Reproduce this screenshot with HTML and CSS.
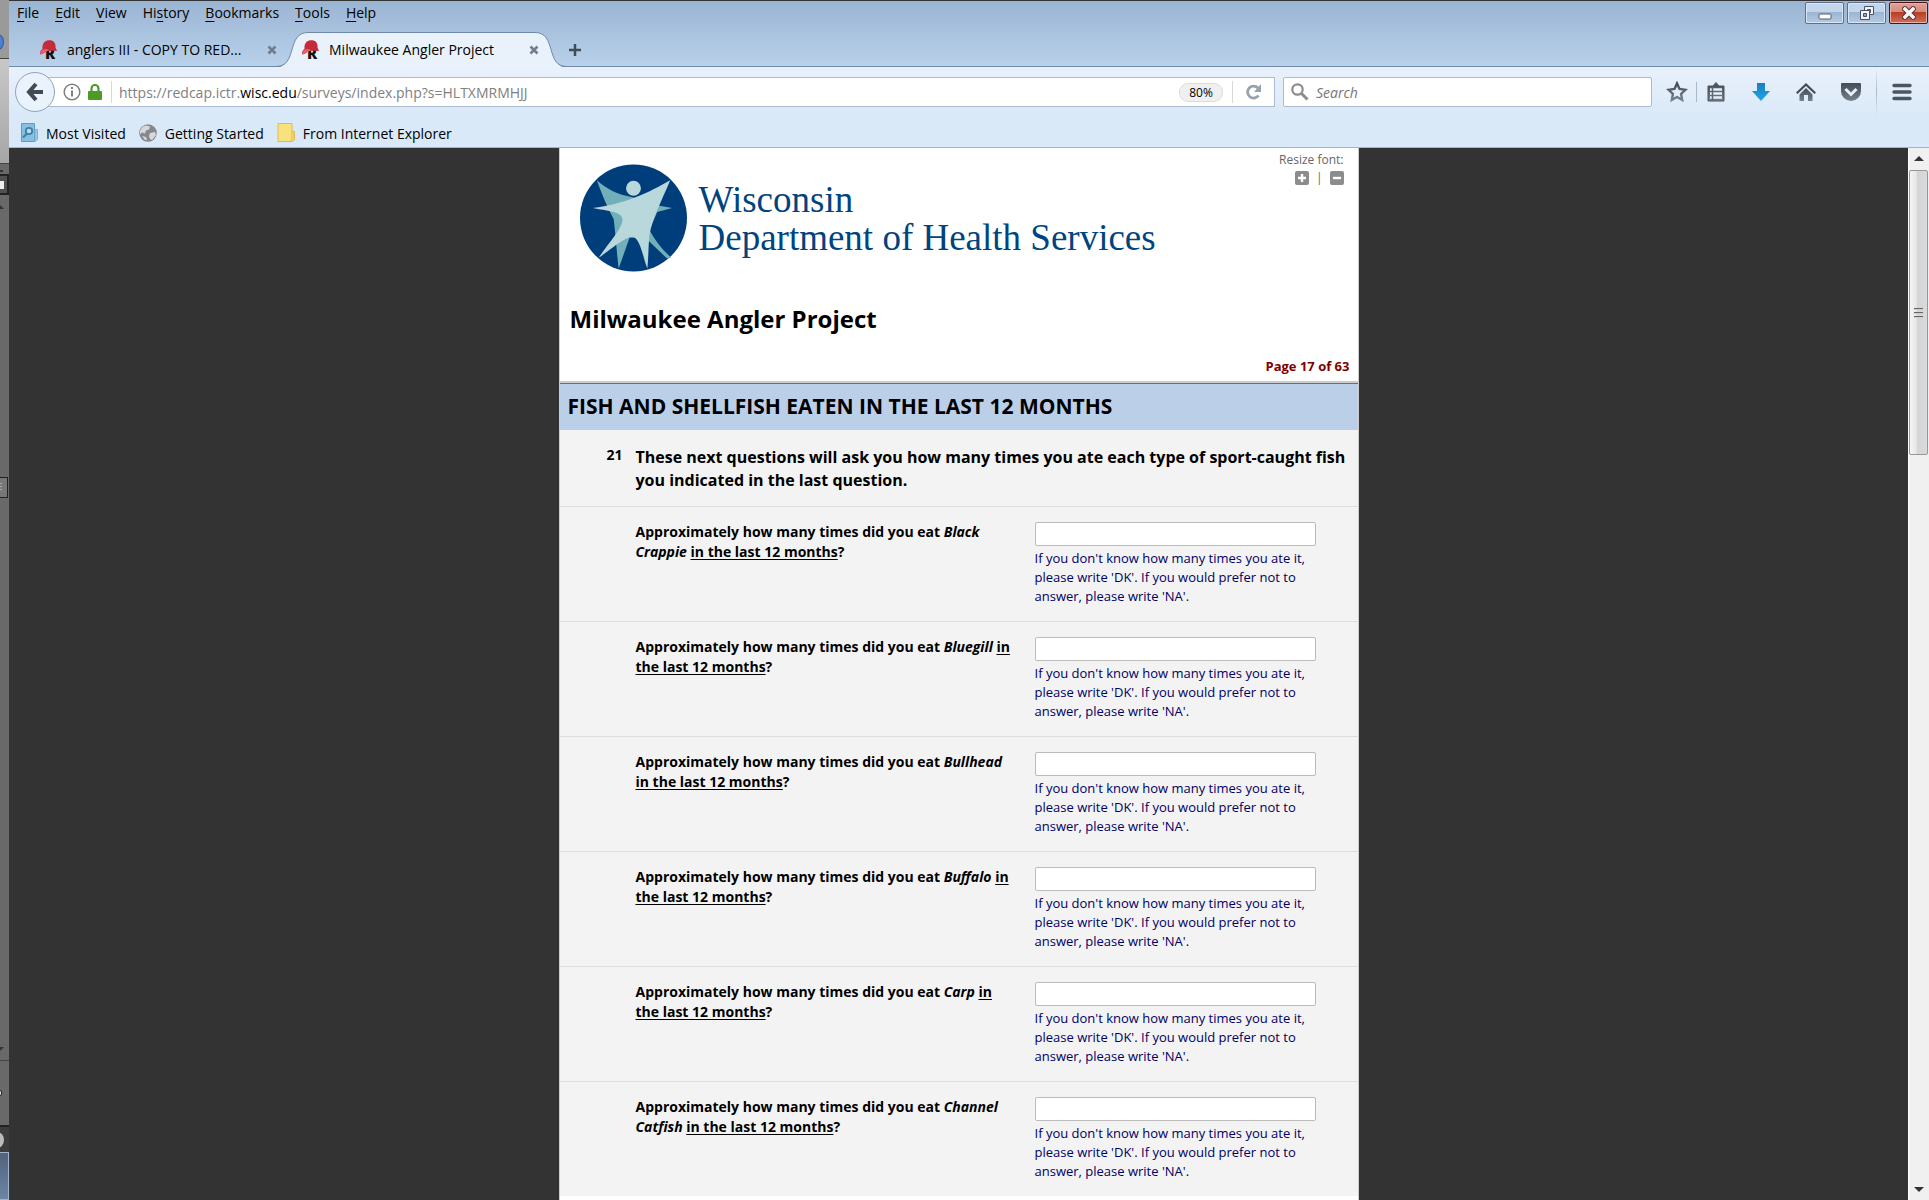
FILE: index.html
```html
<!DOCTYPE html>
<html lang="en">
<head>
<meta charset="utf-8">
<title>Milwaukee Angler Project</title>
<link rel="stylesheet" href="styles.css">
</head>
<body>
<svg class="defs" aria-hidden="true">
  <defs>
    <linearGradient id="steel" x1="0" y1="0" x2="0" y2="1"><stop offset="0" stop-color="#434c55"/><stop offset="1" stop-color="#76818c"/></linearGradient>
    <linearGradient id="sky" x1="0" y1="0" x2="0" y2="1"><stop offset="0" stop-color="#1a7fc0"/><stop offset="1" stop-color="#20a4ea"/></linearGradient>
    <symbol id="redcap" viewBox="0 0 18 20">
      <text x="5" y="19" font-family="Open Sans, sans-serif" font-size="15" font-weight="800" fill="#111">R</text>
      <path d="M2.500 9C2 3 5 .2 9.500 .2 14 .2 16 3.500 15.500 7.500L17 11 9 10.500C6 11 3.500 14 .5 14.500 -.5 12 .5 10.500 2.500 9Z" fill="#c62b3a"/>
      <path d="M.5 14.500C0 12 1 10.500 3 9.500 5 8.500 8 9 9 10.500 6 11 3.500 14 .5 14.500Z" fill="#e4606c"/>
    </symbol>
    <symbol id="x" viewBox="0 0 10 10"><path d="M1.500 1.500l7 7M8.500 1.500l-7 7" stroke="#6f7d8d" stroke-width="2.600"/></symbol>
  </defs>
</svg>

<aside class="behind" aria-hidden="true">
  <div class="behind-top"><span class="orb"></span></div>
  <div class="behind-bar"></div>
  <div class="behind-rule"></div>
  <div class="behind-tool"><span></span></div>
  <div class="behind-track">
    <i class="tri up"></i>
    <div class="behind-grip"><span></span></div>
    <i class="tri down"></i>
  </div>
  <div class="behind-foot"><span></span></div>
  <div class="behind-task"><span></span></div>
  <div class="behind-start"></div>
</aside>

<div class="window">
  <header class="titlebar">
    <div class="menurow">
      <nav class="menu">
        <button><u>F</u>ile</button><button><u>E</u>dit</button><button><u>V</u>iew</button><button>Hi<u>s</u>tory</button><button><u>B</u>ookmarks</button><button><u>T</u>ools</button><button><u>H</u>elp</button>
      </nav>
      <div class="controls">
        <button aria-label="Minimize"><svg width="14" height="16"><rect x="1" y="9" width="12" height="5" rx="1" fill="#fff" stroke="#555d70"/></svg></button>
        <button aria-label="Restore"><svg width="16" height="16"><g stroke="#4a5062" fill="#f4f4f6"><path d="M5.500 1.500h9v8h-9z"/><path d="M8.500 4.500h3v3h-3z" fill="#8ea8c8"/><path d="M1.500 5.500h9v9h-9z"/><path d="M4.500 8.500h3v3h-3z" fill="#8ea8c8"/></g></svg></button>
        <button class="close" aria-label="Close"><svg width="14" height="14"><path d="M3 3l8 8M11 3l-8 8" stroke="#5a3038" stroke-width="5.500" stroke-linecap="square"/><path d="M3 3l8 8M11 3l-8 8" stroke="#f6f6f6" stroke-width="3.500" stroke-linecap="square"/></svg></button>
      </div>
    </div>
    <div class="tabs">
      <div class="tab">
        <svg width="18" height="20"><use href="#redcap"/></svg>
        <span>anglers III - COPY TO RED...</span>
        <button aria-label="Close tab"><svg width="10" height="10"><use href="#x"/></svg></button>
      </div>
      <div class="tab active">
        <svg class="tabshape" width="291" height="36" aria-hidden="true"><path d="M0 35.500C22 35.500 10 .5 32 .5H259C281 .5 269 35.500 291 35.500V36H0Z" fill="#e9f1fb"/><path d="M0 34.500C22 34.500 10 .5 32 .5H259C281 .5 269 34.500 291 34.500" fill="none" stroke="#6f8aa9"/></svg>
        <svg width="18" height="20"><use href="#redcap"/></svg>
        <span>Milwaukee Angler Project</span>
        <button aria-label="Close tab"><svg width="10" height="10"><use href="#x"/></svg></button>
      </div>
      <button class="newtab" aria-label="New tab"><svg width="14" height="14"><path d="M7 1v12M1 7h12" stroke="#414c59" stroke-width="2.500"/></svg></button>
    </div>
  </header>

  <div class="toolbar">
    <div class="navrow">
      <button class="back" aria-label="Back"><svg width="20" height="20"><path d="M18 10H5M11 2l-7 8 7 8" fill="none" stroke="#414a54" stroke-width="4"/></svg></button>
      <div class="urlbar">
        <svg width="18" height="18"><circle cx="9" cy="9" r="7.800" fill="none" stroke="#808080" stroke-width="1.500"/><path d="M9 7.500v6M9 4v2" stroke="#808080" stroke-width="2"/></svg>
        <svg width="14" height="16"><path d="M3.500 8V4.500a3.500 3.500 0 017 0V8" fill="none" stroke="#4f9a26" stroke-width="2.200"/><rect x="0" y="7" width="14" height="9" rx="1" fill="#4f9a26"/></svg>
        <span class="sep"></span>
        <span class="url">https://redcap.ictr.<b>wisc.edu</b>/surveys/index.php?s=HLTXMRMHJJ</span>
        <button class="zoom">80%</button>
        <span class="sep"></span>
        <button aria-label="Reload"><svg width="16" height="16"><path d="M12.500 11.500A6 6 0 1112 4" fill="none" stroke="#95a2b0" stroke-width="2.800"/><path d="M15 0v8H8Z" fill="#95a2b0"/></svg></button>
      </div>
      <label class="search">
        <svg width="18" height="18"><circle cx="6.500" cy="6.500" r="5.200" fill="none" stroke="#8c8c8c" stroke-width="2.200"/><path d="M10.500 10.500l6 6" stroke="#8c8c8c" stroke-width="3"/></svg>
        <input type="text" placeholder="Search" aria-label="Search">
      </label>
      <div class="tools">
        <button aria-label="Bookmark"><svg width="22" height="22"><path d="M11 2.500l2.500 5.500 6 .8-4.400 4.100 1.100 6-5.200-2.900-5.200 2.900 1.100-6L2.500 8.800l6-.8Z" fill="none" stroke="url(#steel)" stroke-width="2.400"/></svg></button>
        <span class="bar"></span>
        <button aria-label="Library"><svg width="18" height="20"><path d="M1 4h5l3-3.500L12 4h5v15H1Z" fill="url(#steel)" stroke="#4b555f"/><path d="M3 7.500h12M3 11.500h12M3 15.500h12" stroke="#e6effa" stroke-width="2.400"/><path d="M5.500 5v13" stroke="#5b6670" stroke-width="1.500"/></svg></button>
        <button aria-label="Downloads"><svg width="18" height="18"><path d="M5 0h8v8h5l-9 10L0 8h5Z" fill="url(#sky)"/></svg></button>
        <button aria-label="Home"><svg width="20" height="20"><path d="M10 1L0 10.500l1.500 1.500L10 4l8.500 8 1.500-1.500Z" fill="#434c55"/><path d="M3.500 12.500L10 6l6.500 6.500V19H12v-6H8v6H3.500Z" fill="url(#steel)"/></svg></button>
        <button aria-label="Pocket"><svg width="22" height="20"><path d="M2 1h18q1 0 1 1v7a10 10 0 01-20 0V2q0-1 1-1Z" fill="url(#steel)"/><path d="M5.500 7l5.500 5.500L16.500 7" fill="none" stroke="#e8f0fa" stroke-width="3"/></svg></button>
        <span class="fade"></span>
        <button aria-label="Menu"><svg width="20" height="18"><path d="M2 2.500h16M2 9h16M2 15.500h16" stroke="#4b555f" stroke-width="3.400" stroke-linecap="round"/></svg></button>
      </div>
    </div>
    <nav class="bookmarks">
      <a href="#"><svg width="18" height="20"><path d="M1.500 .5h13v18h-13Z" fill="#86bfe0" stroke="#5a9cc6"/><path d="M15 6.500h2.500v10L15 18.500Z" fill="#9fcbe6" stroke="#7db2d4"/><circle cx="9" cy="8" r="3.200" fill="#b8dcf0" stroke="#3f7fa8" stroke-width="1.800"/><path d="M7 10.500l-4 4" stroke="#3f7fa8" stroke-width="2.200"/></svg>Most Visited</a>
      <a href="#"><svg width="18" height="18"><circle cx="9" cy="9" r="8.800" fill="#85888c"/><path d="M7 1.500l4 1-1 3-3 1-1 3-3-1-2 2 0-4 3-4ZM11 9l5-1 1 3-4 5-2-1-1-3ZM3 12l4 1 1 3-2 0Z" fill="#d5d8dc"/></svg>Getting Started</a>
      <a href="#"><svg width="18" height="20"><path d="M1 .5h14v18H1Z" fill="#f7e27e" stroke="#dcbd4a"/><path d="M15 8.500h2.500v8l-2 2H13" fill="#efcf62" stroke="#dcbd4a"/></svg>From Internet Explorer</a>
    </nav>
  </div>

  <div class="viewport">
    <main class="survey">
      <div class="masthead">
        <div class="logo">
          <svg width="107" height="108" viewBox="0 0 108 108" aria-hidden="true">
            <circle cx="54" cy="54" r="54" fill="#003e7b"/>
            <path d="M17 16C26 24 38 31 53 33L76 41 93 44 78 48 70 66C76 77 83 86 92 94L88 95 66 74 50 74 39 105C37 88 36 72 34 55 28 44 22 30 17 16Z" fill="#72b0b9"/>
            <path d="M91 16C82 38 73 54 70 72 69 84 69 95 68 105 64 96 61 74 53 73 45 73 30 87 19 94 28 80 42 66 43 56 43 47 26 47 13 44 33 41 46 37 56 33 70 28 80 22 91 16Z" fill="#b9d8dc"/>
            <circle cx="54" cy="24" r="7.500" fill="#b9d8dc"/>
          </svg>
          <p>Wisconsin<br>Department of Health Services</p>
        </div>
        <div class="resize">
          <span>Resize font:</span>
          <div>
            <button aria-label="Larger"><svg width="14" height="14"><path d="M7 3v8M3 7h8" stroke="#fff" stroke-width="2.400"/></svg></button>
            <span>|</span>
            <button aria-label="Smaller"><svg width="14" height="14"><path d="M3 7h8" stroke="#fff" stroke-width="2.400"/></svg></button>
          </div>
        </div>
      </div>
      <h1>Milwaukee Angler Project</h1>
      <p class="pageno">Page 17 of 63</p>
      <form>
        <h2>FISH AND SHELLFISH EATEN IN THE LAST 12 MONTHS</h2>
        <div class="intro"><span>21</span><p>These next questions will ask you how many times you ate each type of sport-caught fish you indicated in the last question.</p></div>
        <div class="question"><label for="q1">Approximately how many times did you eat <i>Black Crappie</i> <u>in the last 12 months</u>?</label><div><input id="q1" type="text"><p>If you don't know how many times you ate it, please write 'DK'. If you would prefer not to answer, please write 'NA'.</p></div></div>
        <div class="question"><label for="q2">Approximately how many times did you eat <i>Bluegill</i> <u>in the last 12 months</u>?</label><div><input id="q2" type="text"><p>If you don't know how many times you ate it, please write 'DK'. If you would prefer not to answer, please write 'NA'.</p></div></div>
        <div class="question"><label for="q3">Approximately how many times did you eat <i>Bullhead</i> <u>in the last 12 months</u>?</label><div><input id="q3" type="text"><p>If you don't know how many times you ate it, please write 'DK'. If you would prefer not to answer, please write 'NA'.</p></div></div>
        <div class="question"><label for="q4">Approximately how many times did you eat <i>Buffalo</i> <u>in the last 12 months</u>?</label><div><input id="q4" type="text"><p>If you don't know how many times you ate it, please write 'DK'. If you would prefer not to answer, please write 'NA'.</p></div></div>
        <div class="question"><label for="q5">Approximately how many times did you eat <i>Carp</i> <u>in the last 12 months</u>?</label><div><input id="q5" type="text"><p>If you don't know how many times you ate it, please write 'DK'. If you would prefer not to answer, please write 'NA'.</p></div></div>
        <div class="question"><label for="q6">Approximately how many times did you eat <i>Channel Catfish</i> <u>in the last 12 months</u>?</label><div><input id="q6" type="text"><p>If you don't know how many times you ate it, please write 'DK'. If you would prefer not to answer, please write 'NA'.</p></div></div>
      </form>
    </main>
    <div class="scrollbar" aria-hidden="true">
      <i class="tri up"></i>
      <div class="thumb"><span></span><span></span><span></span></div>
      <i class="tri down"></i>
    </div>
  </div>
</div>
</body>
</html>
```
FILE: styles.css
```css
* { box-sizing: border-box; }
body {
  margin: 0;
  height: 100vh;
  display: flex;
  overflow: hidden;
  font-family: "Open Sans", "Noto Sans", sans-serif;
  font-size: 14px;
  color: #000;
  background: #333;
}
.defs { position: absolute; width: 0; height: 0; }
button { padding: 0; border: 0; background: none; font: inherit; color: inherit; display: flex; align-items: center; justify-content: center; }
button u { text-underline-offset: 3px; }
p, h1, h2 { margin: 0; }
svg { flex: none; display: block; }
.tri { width: 0; height: 0; border: 5px solid transparent; }
.tri.up { border-top: 0; border-bottom-color: #333; }
.tri.down { border-bottom: 0; border-top-color: #333; }

/* sliver of the window that lies behind the browser */
.behind { width: 9px; flex: none; display: flex; flex-direction: column; overflow: hidden; background: #696969; }
.behind-top { height: 59px; background: #9a9a9a; border-bottom: 1px solid #444; display: flex; align-items: flex-end; padding-bottom: 8px; }
.orb { width: 12px; height: 16px; margin-left: -8px; flex: none; border-radius: 50%; background: #4d7fd0; border: 1px solid #3159a5; }
.behind-bar { height: 105px; background: linear-gradient(#c8c8c8, #a6a6a6); border-bottom: 1px solid #444; }
.behind-rule { height: 10px; background: linear-gradient(#333, #333) 0 6px / 3px 2px no-repeat #696969; }
.behind-tool { height: 21px; background: #505050; border: 2px solid #222; border-left: 0; display: flex; align-items: center; }
.behind-tool span { width: 4px; height: 8px; background: #eee; }
.behind-track { flex: 1; display: flex; flex-direction: column; padding: 9px 0 8px; border-bottom: 1px solid #444; }
.behind-track .tri { margin-left: -6px; }
.behind-track .up { margin-bottom: 268px; }
.behind-grip { height: 21px; width: 8px; margin: 0 0 auto; background: #777; border: 1px solid #222; border-left: 0; display: flex; align-items: center; }
.behind-grip span { width: 2px; height: 9px; background: repeating-linear-gradient(#aaa 0 1px, #777 1px 3px); }
.behind-foot { height: 64px; display: flex; align-items: center; }
.behind-foot span { width: 4px; height: 6px; margin-left: -2px; background: #ddd; border: 1px solid #222; border-radius: 2px; }
.behind-task { height: 27px; background: #3c3c3c; border-top: 2px solid #222; display: flex; align-items: center; }
.behind-task span { width: 14px; height: 16px; margin-left: -10px; flex: none; border-radius: 50%; background: #bbb; }
.behind-start { height: 48px; background: linear-gradient(#50627c, #6d86a5); border: 1px solid #9fb4cc; border-left: 0; }

.window { flex: 1; min-width: 0; display: flex; flex-direction: column; }
.titlebar { height: 67px; background: linear-gradient(#9ab4d3, #b9d1ea); border-top: 1px solid #333; border-bottom: 1px solid #6f8aa9; flex: none; }
.menurow { display: flex; justify-content: space-between; height: 31px; }
.menu { display: flex; gap: 16px; padding-left: 8px; height: 23px; }
.controls { display: flex; gap: 3px; padding: 1px 1px 0 0; }
.controls button { width: 39px; height: 22px; border: 1px solid #5b6f90; border-radius: 2px; background: linear-gradient(#c3d5ea 45%, #9bb4d1 45%, #b4cae2); box-shadow: inset 0 0 0 1px #d9e6f4; }
.controls .close { border-color: #4d1220; background: linear-gradient(#e2a196, #d8897c 45%, #b63c23 45%, #cf7059); box-shadow: inset 0 0 0 1px #e9b0a4; }

.tabs { display: flex; height: 35px; }
.tab { position: relative; display: flex; align-items: center; height: 35px; width: 262px; padding-left: 31px; }
.tab span { position: relative; flex: 1; padding-left: 9px; white-space: nowrap; }
.tab button { position: relative; margin-right: -6px; }
.tab > svg:not(.tabshape) { position: relative; }
.tabshape { position: absolute; left: 5px; top: 0; }
.newtab { margin-left: 35px; }

.toolbar { flex: none; background: linear-gradient(#e9f1fb, #dae9f8 60%); border-bottom: 1px solid #9fb6d4; height: 81px; }
.navrow { display: flex; height: 50px; align-items: center; padding: 0 16px 0 6px; }
.back { width: 40px; height: 40px; flex: none; border: 1px solid #8fa4be; border-radius: 50%; background: #eaf2fb; position: relative; }
.urlbar { flex: 1; height: 30px; margin-left: -8px; padding: 0 12px 0 15px; display: flex; align-items: center; gap: 7px; background: #fff; border: 1px solid #a9bcd3; }
.urlbar .sep { width: 1px; height: 22px; background: #d8d8d8; margin: 0 2px; }
.urlbar .url { flex: 1; margin-left: -2px; color: #808080; white-space: nowrap; }
.url b { font-weight: 400; color: #000; }
.zoom { width: 44px; height: 19px; border: 1px solid #ddd; border-radius: 9px; background: #f0f0f0; font-size: 12px; }
.urlbar button:last-child { margin-left: 4px; }
.search { width: 369px; height: 30px; margin-left: 8px; padding-left: 7px; display: flex; align-items: center; gap: 7px; background: #fff; border: 1px solid #a9bcd3; border-radius: 2px; }
.search input { flex: 1; border: 0; padding: 0; background: none; font: italic 14px "Open Sans", sans-serif; }
.search input::placeholder { color: #757575; opacity: 1; }
.tools { display: flex; align-items: center; padding-left: 14px; }
.tools button { width: 22px; }
.tools button + button { margin-left: 23px; }
.tools .bar { width: 1px; height: 20px; margin: 0 8px; background: #a9b8ca; }
.tools .fade { width: 1px; height: 48px; margin: 0 14px; background: linear-gradient(transparent, #a9b8ca, transparent); }
.bookmarks { display: flex; gap: 13px; padding: 4px 0 0 11px; height: 28px; }
.bookmarks a { display: flex; align-items: center; gap: 8px; color: #000; text-decoration: none; }

.viewport { flex: 1; min-height: 0; display: flex; background: #333; }
.survey { width: 800px; margin: 0 auto; overflow: hidden; background: #fff; border: solid #ccc; border-width: 0 1px; }
.masthead { display: flex; justify-content: space-between; align-items: flex-start; padding: 0 14px 0 20px; }
.logo { display: flex; gap: 12px; padding-top: 16px; }
.logo p { padding-top: 17px; font: 37px/38px "Liberation Serif", serif; color: #00447f; white-space: nowrap; }
.resize { display: flex; flex-direction: column; align-items: flex-end; padding-top: 3px; font-size: 12px; line-height: 17px; color: #666; }
.resize div { display: flex; align-items: center; gap: 7px; padding-top: 1px; }
.resize button { border-radius: 2px; background: #8c8c8c; }
h1 { padding: 30px 10px 0; font-size: 24px; line-height: 34px; }
.pageno { padding: 21px 8px 5px 0; text-align: right; font-size: 13px; line-height: 19px; font-weight: 700; color: #800000; }
form { border-top: 2px solid #ccc; background: #f3f3f3; }
h2 { padding: 8px; border-top: 1px solid #5070a8; border-bottom: 1px solid #ccc; background: #bccfe8; font-size: 21px; line-height: 29px; }
.intro { display: grid; grid-template-columns: 63px 1fr; column-gap: 13px; padding: 16px 10px 14px 0; font-weight: 700; font-size: 16px; line-height: 23px; }
.intro span { text-align: right; font-size: 14px; line-height: 18px; }
.question { display: grid; grid-template-columns: 380px 281px; column-gap: 19px; min-height: 115px; padding: 15px 0 10px 76px; border-top: 1px solid #ddd; }
.question label { font-weight: 700; line-height: 20px; }
.question u { text-underline-offset: 2px; }
.question input { display: block; width: 281px; height: 24px; border: 1px solid #bbb; border-radius: 2px; background: #fff; }
.question p { padding-top: 3px; font-size: 13px; line-height: 19px; color: #000066; }

.scrollbar { width: 21px; flex: none; display: flex; flex-direction: column; align-items: center; padding: 8px 1px 8px 0; background: #f0f0f0; border-left: 1px solid #fff; }
.thumb { width: 19px; height: 285px; margin: 9px 0 auto; border: 1px solid #979797; border-radius: 2px; background: linear-gradient(90deg, #f5f5f5, #e6e6e7 38%, #d3d4d6 40%, #d9dadc); display: flex; flex-direction: column; align-items: center; justify-content: center; gap: 2px; }
.thumb span { width: 9px; height: 2px; background: #666; border-bottom: 1px solid #ccc; }
```
